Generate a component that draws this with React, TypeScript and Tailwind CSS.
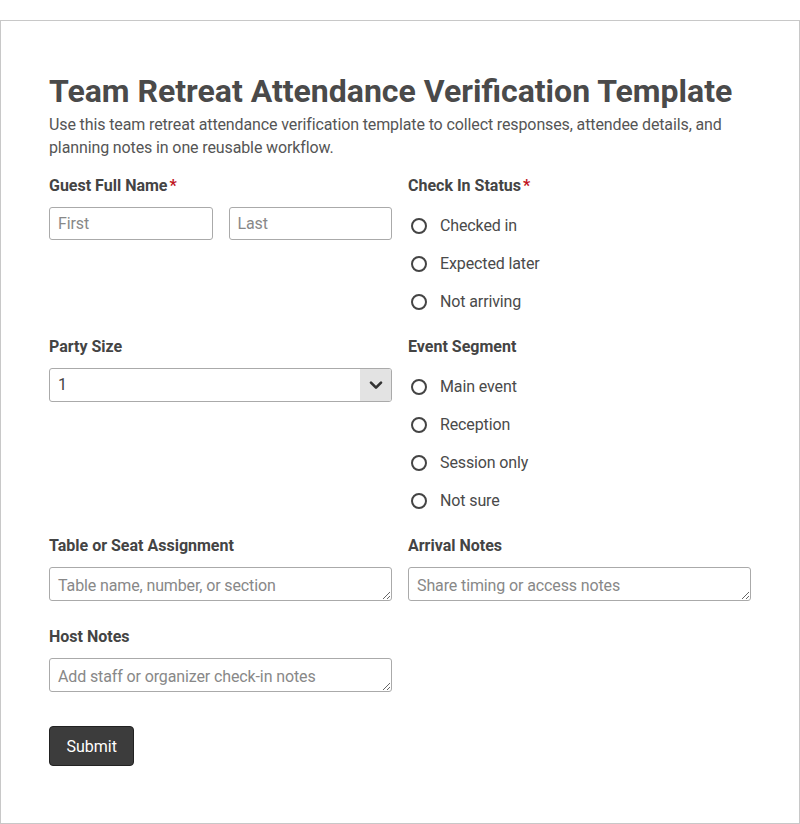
import React from "react";

const font = { fontFamily: "Roboto, 'Liberation Sans', sans-serif" };

function Label({ text, required }: { text: string; required?: boolean }) {
  return (
    <div className="mb-[9px] text-[16px] font-bold leading-6 text-[#444]">
      {text}
      {required && <span className="ml-[2px] text-[#c0141e]">*</span>}
    </div>
  );
}

function Radio({ label }: { label: string }) {
  return (
    <label className="flex h-[38px] items-center">
      <span className="ml-[3px] h-4 w-4 rounded-full border-2 border-[#444]" />
      <span className="ml-[13px] text-[16px] tracking-[-0.12px] text-[#4a4a4a]">{label}</span>
    </label>
  );
}

function TextBox({ placeholder }: { placeholder: string }) {
  return (
    <textarea
      rows={1}
      placeholder={placeholder}
      className="block h-[34px] w-full resize-y rounded-[3px] border border-[#aaa] px-2 pb-[3px] pt-[7px] text-[16px] leading-[22px] tracking-[-0.12px] text-[#444] placeholder:text-[#888]"
    />
  );
}

export default function App() {
  return (
    <div className="min-h-[824px] bg-white pt-5" style={font}>
      <div className="border border-[#c8c8c8] px-12 pb-[57px] pt-[51px]">
        <h1 className="text-[32px] font-bold leading-[38px] text-[#4a4a4a]">
          Team Retreat Attendance Verification Template
        </h1>
        <p className="mt-[3px] text-[16px] leading-[23px] tracking-[-0.12px] text-[#555]">
          Use this team retreat attendance verification template to collect responses, attendee details, and planning
          notes in one reusable workflow.
        </p>

        <div className="mt-[15px] grid grid-cols-2 gap-x-4 gap-y-[14px]">
          <div>
            <Label text="Guest Full Name" required />
            <div className="grid grid-cols-2 gap-4">
              <input
                placeholder="First"
                className="h-[33px] w-full rounded-[3px] border border-[#aaa] px-2 text-[16px] tracking-[-0.12px] placeholder:text-[#888]"
              />
              <input
                placeholder="Last"
                className="h-[33px] w-full rounded-[3px] border border-[#aaa] px-2 text-[16px] tracking-[-0.12px] placeholder:text-[#888]"
              />
            </div>
          </div>
          <div>
            <Label text="Check In Status" required />
            <div>
              <Radio label="Checked in" />
              <Radio label="Expected later" />
              <Radio label="Not arriving" />
            </div>
          </div>

          <div>
            <Label text="Party Size" />
            <div className="flex h-[34px] overflow-hidden rounded-[3px] border border-[#aaa]">
              <div className="flex flex-1 items-center px-2 text-[16px] text-[#444]">1</div>
              <div className="flex w-[31px] items-center justify-center bg-[#e3e3e3]">
                <svg width="16" height="16" viewBox="0 0 24 24" fill="none" stroke="#333" strokeWidth="4" strokeLinecap="round" strokeLinejoin="round">
                  <path d="M4.5 8.5l7.5 7.5 7.5-7.5" />
                </svg>
              </div>
            </div>
          </div>
          <div>
            <Label text="Event Segment" />
            <div>
              <Radio label="Main event" />
              <Radio label="Reception" />
              <Radio label="Session only" />
              <Radio label="Not sure" />
            </div>
          </div>

          <div className="pb-[10px]">
            <Label text="Table or Seat Assignment" />
            <TextBox placeholder="Table name, number, or section" />
          </div>
          <div className="pb-[10px]">
            <Label text="Arrival Notes" />
            <TextBox placeholder="Share timing or access notes" />
          </div>

          <div className="pb-[10px]">
            <Label text="Host Notes" />
            <TextBox placeholder="Add staff or organizer check-in notes" />
          </div>
        </div>

        <button className="mt-[24px] h-10 rounded-[4px] border border-[#222] bg-[#3c3c3c] px-[16.5px] pt-px text-[16px] text-white">
          Submit
        </button>
      </div>
    </div>
  );
}
